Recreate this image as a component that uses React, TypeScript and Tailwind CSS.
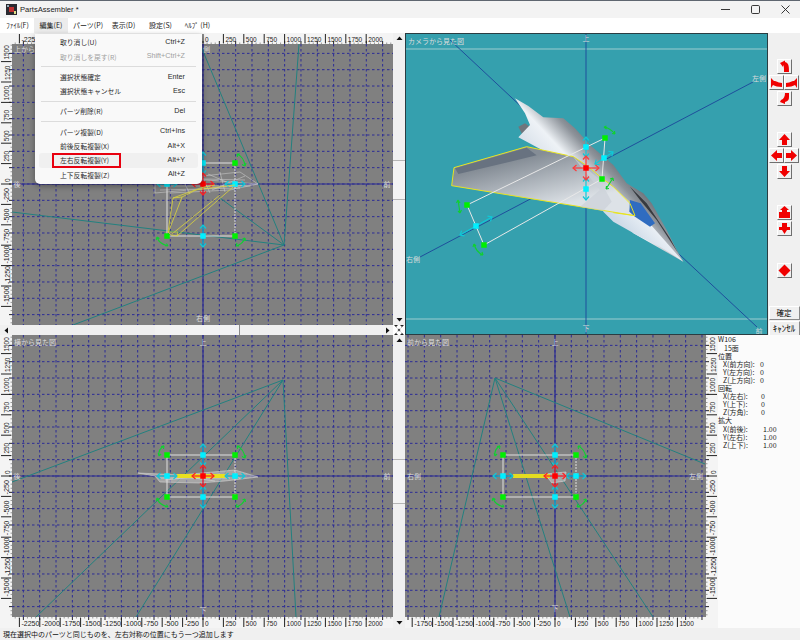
import React from "react";

const U = 20.4 / 250;
const GRID = 16.33;
const seq = (a: number, b: number, s: number) => {
  const r: number[] = [];
  for (let v = a; v <= b; v += s) r.push(v);
  return r;
};

type Box = [number, number, number, number];

function Lbl({ x, y, t, a = "middle" }: { x: number; y: number; t: string; a?: "start" | "middle" | "end" }) {
  return (
    <text x={x} y={y} fontSize={7} fill="#dcdcdc" textAnchor={a} dominantBaseline="central">
      {t}
    </text>
  );
}

function RulerText({ x, y, v, rot }: { x: number; y: number; v: number; rot?: boolean }) {
  const t = String(v);
  return (
    <text
      x={x}
      y={y}
      fontSize={8}
      fill="#222"
      textLength={t.length * 3.6}
      lengthAdjust="spacingAndGlyphs"
      transform={rot ? `rotate(-90 ${x} ${y})` : undefined}
      className="font-['Liberation_Sans',sans-serif]"
    >
      {t}
    </text>
  );
}

function Pane({
  box,
  canvas,
  ax,
  ay,
  xVals,
  yVals,
  rulerX,
  rulerY,
  children,
}: {
  box: Box;
  canvas: Box;
  ax: number;
  ay: number;
  xVals: number[];
  yVals: number[];
  rulerX: "top" | "bottom";
  rulerY: "left" | "right";
  children: React.ReactNode;
}) {
  const [x, y, w, h] = box;
  const [cx, cy, cw, ch] = canvas;
  const vert = seq(-30, 30, 1).map((n) => ax + n * GRID).filter((v) => v >= cx && v <= cx + cw);
  const horz = seq(-30, 30, 1).map((n) => ay + n * GRID).filter((v) => v >= cy && v <= cy + ch);
  const rxTop = rulerX === "top" ? cy - 11 : cy + ch;
  const ryLeft = rulerY === "left" ? cx - 12 : cx + cw;
  const edgeY = rulerX === "top" ? cy : cy + ch;
  const edgeX = rulerY === "left" ? cx : cx + cw;
  const dirY = rulerX === "top" ? -1 : 1;
  const dirX = rulerY === "left" ? -1 : 1;
  return (
    <svg className="block shrink-0" width={w} height={h} viewBox={`${x} ${y} ${w} ${h}`}>
      <rect x={x} y={y} width={w} height={h} fill="#f4f4f4" />
      <rect x={cx} y={cy} width={cw} height={ch} fill="#808080" />
      {vert.map((v) => (
        <line key={"v" + v} x1={v} x2={v} y1={cy} y2={cy + ch} stroke="#2c2c96" strokeDasharray="2.5 2.5" />
      ))}
      {horz.map((v) => (
        <line key={"h" + v} x1={cx} x2={cx + cw} y1={v} y2={v} stroke="#2c2c96" strokeDasharray="2.5 2.5" />
      ))}
      <line x1={ax} x2={ax} y1={cy} y2={cy + ch} stroke="#2a2a90" strokeWidth={1.2} />
      <line x1={cx} x2={cx + cw} y1={ay} y2={ay} stroke="#2a2a90" strokeWidth={1.2} />
      {children}
      {seq(-60, 60, 1).map((n) => {
        const px = ax + n * GRID * 0.25;
        if (px < cx || px > cx + cw) return null;
        const major = n % 4 === 0;
        return (
          <line key={"tx" + n} x1={px} x2={px} y1={edgeY} y2={edgeY + dirY * (major ? 3 : 1.5)} stroke={major ? "#222" : "#999"} />
        );
      })}
      {seq(-60, 60, 1).map((n) => {
        const py = ay + n * GRID * 0.25;
        if (py < cy || py > cy + ch) return null;
        const major = n % 4 === 0;
        return (
          <line key={"ty" + n} y1={py} y2={py} x1={edgeX} x2={edgeX + dirX * (major ? 3 : 1.5)} stroke={major ? "#222" : "#999"} />
        );
      })}
      {xVals.map((v) => {
        const px = ax + v * U;
        return (
          <g key={"rx" + v}>
            <line x1={px} x2={px} y1={rxTop + 1} y2={rxTop + 10} stroke="#222" />
            <RulerText x={px + 2} y={rxTop + 9} v={v} />
          </g>
        );
      })}
      {yVals.map((v) => {
        const py = ay - v * U;
        return (
          <g key={"ry" + v}>
            <line y1={py} y2={py} x1={ryLeft + 1} x2={ryLeft + 11} stroke="#222" />
            <RulerText x={ryLeft + 9.5} y={py - 2} v={v} rot />
          </g>
        );
      })}
    </svg>
  );
}

const Sq = ({ x, y, c, s = 5.5 }: { x: number; y: number; c: string; s?: number }) => (
  <rect x={x - s / 2} y={y - s / 2} width={s} height={s} fill={c} />
);

function Arrow2({ x, y, dx, dy, c }: { x: number; y: number; dx: number; dy: number; c: string }) {
  const n = Math.hypot(dx, dy);
  const ux = dx / n;
  const uy = dy / n;
  const hd = (sx: number, sy: number, d: number) =>
    `M${sx - ux * 3.5 * d - uy * 3} ${sy - uy * 3.5 * d + ux * 3}L${sx} ${sy}L${sx - ux * 3.5 * d + uy * 3} ${sy - uy * 3.5 * d - ux * 3}`;
  return (
    <g fill="none" stroke={c} strokeWidth={1.2}>
      <line x1={x - dx} y1={y - dy} x2={x + dx} y2={y + dy} />
      <path d={hd(x + dx, y + dy, 1)} />
      <path d={hd(x - dx, y - dy, -1)} />
    </g>
  );
}

function Rot({ d }: { d: string }) {
  return <path d={d} fill="none" stroke="#10d030" strokeWidth={1.1} />;
}

function Handles({ l, r, t, b, cx, cy }: { l: number; r: number; t: number; b: number; cx: number; cy: number }) {
  return (
    <g>
      <path d={`M${r} ${t}H${l}V${b}H${r}`} fill="none" stroke="#e0e0e0" strokeWidth={1} />
      <line x1={r} x2={r} y1={t} y2={b} stroke="#e0e0e0" strokeDasharray="2 1" />
      {[t, b].map((y) => (
        <Arrow2 key={y} x={cx} y={y} dx={0} dy={11} c="#10c8d8" />
      ))}
      {[l, r].map((x) => (
        <Arrow2 key={x} x={x} y={cy} dx={10} dy={0} c="#10c8d8" />
      ))}
      <Arrow2 x={cx} y={cy} dx={11} dy={0} c="#ff2020" />
      <Arrow2 x={cx} y={cy} dx={0} dy={11} c="#ff2020" />
      <Rot d={`M${l - 8} ${t + 1}Q${l - 9} ${t - 6} ${l - 3} ${t - 9}M${l - 3} ${t - 9}l-3 .5M${l - 3} ${t - 9}l-.5 3M${l - 8} ${t + 1}l-.8-3M${l - 8} ${t + 1}l2-2`} />
      <Rot d={`M${r + 2} ${t - 9}Q${r + 9} ${t - 6} ${r + 10} ${t + 3}M${r + 10} ${t + 3}l-3-1.5M${r + 10} ${t + 3}l1-3M${r + 2} ${t - 9}l3 0M${r + 2} ${t - 9}l.5 3`} />
      <Rot d={`M${l - 10} ${b + 1}Q${l - 8} ${b + 8} ${l + 1} ${b + 10}M${l + 1} ${b + 10}l-3-.3M${l + 1} ${b + 10}l-1.5-2.5M${l - 10} ${b + 1}l-.8 3M${l - 10} ${b + 1}l2.5 1.5`} />
      <Rot d={`M${r + 10} ${b + 2}Q${r + 8} ${b + 8} ${r + 1} ${b + 10}M${r + 1} ${b + 10}l3 0M${r + 1} ${b + 10}l1-3M${r + 10} ${b + 2}l-2.5.8M${r + 10} ${b + 2}l.5 3`} />
      {[
        [l, t],
        [r, t],
        [l, b],
        [r, b],
      ].map(([x, y]) => (
        <Sq key={x + "-" + y} x={x} y={y} c="#00f000" />
      ))}
      {[
        [cx, t],
        [cx, b],
        [l, cy],
        [r, cy],
      ].map(([x, y]) => (
        <Sq key={"c" + x + "-" + y} x={x} y={y} c="#00f0ff" />
      ))}
      <Sq x={cx} y={cy} c="#ff0000" />
    </g>
  );
}

function Teal({ apex, to }: { apex: [number, number]; to: [number, number][] }) {
  return (
    <g stroke="#23807f" strokeWidth={1} fill="none">
      {to.map(([x, y]) => (
        <line key={x + "," + y} x1={apex[0]} y1={apex[1]} x2={x} y2={y} />
      ))}
    </g>
  );
}

const X_LEFT = seq(-2250, 2000, 250);
const X_RIGHT = seq(-1750, 1500, 250);
const Y_VALS = seq(-1500, 1500, 250);

function TopView() {
  // ruler labels that lie wholly under the open menu are not drawn
  const xs = X_LEFT.filter((v) => v <= -2250 || v >= 0);
  return (
    <Pane box={[0, 33, 393, 292]} canvas={[12, 44, 381, 281]} ax={203} ay={184} xVals={xs} yVals={Y_VALS} rulerX="top" rulerY="left">
      <Teal apex={[284, 245]} to={[[200, 44], [299, 44], [12, 212], [73, 325], [220, 198]]} />
      <g fill="none" stroke="#d4d4d4" strokeWidth={0.5}>
        <path d="M155 176 L258 184 L155 193 Z" />
        <path d="M165 180 L240 172 L258 184 L230 190 L170 193" />
        <path d="M180 174 L190 194 M200 172 L210 193 M220 172 L225 192 M160 186 L250 186 M160 190 L240 188 M165 178 L245 180 M208 174 L240 188 M212 190 L245 176" />
      </g>
      <text x={14} y={49} fontSize={7} fill="#dcdcdc" dominantBaseline="central">上から</text>
      <text x={203} y={49} fontSize={7} fill="#dcdcdc" dominantBaseline="central">側</text>
      <Lbl x={203} y={318} t="右側" />
      <Lbl x={17} y={184} t="後" />
      <Lbl x={387} y={184} t="前" />
      <Handles l={167} r={235} t={163} b={236} cx={203} cy={184} />
      <g fill="none" stroke="#dcd43c" strokeWidth={0.8}>
        <path d="M168 232 L173 198 L182 197 L168 233" />
        <path d="M173 198 L195 190 L235 185" />
        <path d="M182 197 L200 188 L215 185" />
        <path d="M177 236 L233 187" />
        <path d="M172 234 L220 195" />
        <path d="M168 232 L178 232 L177 236 L171 235 Z" />
      </g>
    </Pane>
  );
}

function SideView() {
  return (
    <Pane box={[0, 335, 393, 293]} canvas={[12, 335, 381, 282]} ax={203} ay={476} xVals={X_LEFT} yVals={Y_VALS} rulerX="bottom" rulerY="left">
      <Teal apex={[283, 380]} to={[[12, 482], [36, 617], [136, 617], [296, 617]]} />
      <path d="M138 473 L180 475 L235 470 L258 477 L225 481 L200 483 L160 482 L155 476 Z" fill="#c4c4c4" fillOpacity={0.55} stroke="#d4d4d4" strokeWidth={0.6} />
      <path d="M160 478 L230 478 M165 480 L220 474 M180 476 L215 481 M235 472 L240 479" fill="none" stroke="#e0e0e0" strokeWidth={0.5} />
      <rect x={177} y={474} width={48} height={4} fill="#e8e020" />
      <Lbl x={14} y={342} t="横から見た図" a="start" />
      <Lbl x={203} y={342} t="上" />
      <Lbl x={203} y={610} t="下" />
      <Lbl x={17} y={476} t="後" />
      <Lbl x={387} y={476} t="前" />
      <Handles l={167} r={235} t={455} b={497} cx={203} cy={476} />
    </Pane>
  );
}

function FrontView() {
  return (
    <Pane box={[405, 335, 313, 293]} canvas={[405, 335, 301, 282]} ax={555} ay={476} xVals={X_RIGHT} yVals={Y_VALS} rulerX="bottom" rulerY="right">
      <Teal apex={[495, 378]} to={[[705, 464], [439, 617], [570, 617], [653, 617]]} />
      <path d="M545 474 L566 472 L565 481 L552 483 Z" fill="#c8c8c8" fillOpacity={0.6} stroke="#d0d0d0" strokeWidth={0.7} />
      <rect x={513} y={474} width={37} height={4} fill="#e4dc20" />
      <Lbl x={407} y={342} t="前から見た図" a="start" />
      <Lbl x={555} y={342} t="上" />
      <Lbl x={555} y={608} t="下" />
      <Lbl x={407} y={476} t="右側" a="start" />
      <Lbl x={703} y={476} t="左側" a="end" />
      <Handles l={503} r={576} t={455} b={497} cx={555} cy={476} />
    </Pane>
  );
}

function CameraView() {
  return (
    <svg className="block shrink-0" width={363} height={302} viewBox="405 33 363 302">
      <rect x={405} y={33} width={363} height={302} fill="#35a0ae" />
      <line x1={405} x2={768} y1={49} y2={49} stroke="#b8d8d8" strokeWidth={0.8} />
      <line x1={405} x2={768} y1={319} y2={319} stroke="#b8d8d8" strokeWidth={0.8} />
      <g stroke="#1f4f9c" strokeWidth={1}>
        <line x1={586} x2={586} y1={33} y2={334} />
        <line x1={420} y1={257} x2={753} y2={82} />
        <line x1={450} y1={40} x2={757} y2={327} />
      </g>
      <defs>
        <linearGradient id="fus" gradientUnits="userSpaceOnUse" x1={640} y1={350} x2={480} y2={500}>
          <stop offset="0" stopColor="#565c63" />
          <stop offset="0.28" stopColor="#8d939a" />
          <stop offset="0.55" stopColor="#eef2f6" />
          <stop offset="1" stopColor="#cfd9e4" />
        </linearGradient>
        <linearGradient id="wing" gradientUnits="userSpaceOnUse" x1={430} y1={370} x2={470} y2={530}>
          <stop offset="0" stopColor="#858d96" />
          <stop offset="1" stopColor="#dde2e7" />
        </linearGradient>
        <linearGradient id="nose" gradientUnits="userSpaceOnUse" x1={760} y1={560} x2={700} y2={620}>
          <stop offset="0" stopColor="#f4f7fa" />
          <stop offset="1" stopColor="#cfdbe8" />
        </linearGradient>
      </defs>
      <g transform="translate(400 30) scale(0.33333)">
        <path d="M355 290 L375 280 L392 292 L366 312 Z" fill="#70767c" />
        <path d="M345 205 L385 228 L430 262 L490 265 L525 295 L570 345 L640 405 L680 460 L730 490 L755 520 L800 600 L830 660 L850 695 L700 610 L500 400 L355 322 L390 285 L375 250 Z" fill="url(#fus)" />
        <path d="M690 470 L740 520 L810 625 L836 672 L770 570 L720 510 Z" fill="#2a2d31" opacity={0.85} />
        <path d="M600 500 L650 480 L705 530 L850 695 L780 650 L720 620 L640 575 L610 545 Z" fill="url(#nose)" />
        <path d="M380 350 L162 413 L155 467 L705 557 L690 520 L640 470 L600 440 L565 410 L520 380 Z" fill="url(#wing)" stroke="#e8e420" strokeWidth={3} />
        <path d="M380 353 L410 376 L175 432 L165 415 Z" fill="#687280" />
        <path d="M520 382 L600 450 L635 515 L610 542 L540 530 L600 480 Z" fill="#ccd2d8" opacity={0.7} />
        <path d="M690 510 L722 520 L765 580 L750 590 L705 560 L688 545 Z" fill="#2f6cc0" />
        <path d="M690 520 L705 557 L640 548" fill="none" stroke="#e8e420" strokeWidth={3} />
      </g>
      <g fill="none" stroke="#e8e8e8" strokeWidth={1}>
        <line x1={467} y1={205} x2={605} y2={138} />
        <line x1={484} y1={245} x2={602} y2={179} />
        <line x1={467} y1={205} x2={484} y2={245} />
        <line x1={605} y1={138} x2={602} y2={179} />
      </g>
      <Arrow2 x={586} y={147} dx={0} dy={10} c="#10c8d8" />
      <Arrow2 x={586} y={189} dx={0} dy={11} c="#10c8d8" />
      <Arrow2 x={604} y={158} dx={9} dy={-6} c="#10c8d8" />
      <Arrow2 x={476} y={226} dx={16} dy={-9} c="#10c8d8" />
      <Arrow2 x={586} y={168} dx={13} dy={0} c="#ff3a3a" />
      <Arrow2 x={586} y={168} dx={0} dy={12} c="#ff3a3a" />
      <Rot d="M604 127 Q610 128 615 134 M604 127l2.5 2M604 127l2.5-1M615 134l-.5-3M615 134l-3-.5" />
      <Rot d="M606 189 L613 178 M606 189l3-.5M606 189l.5-3M613 178l-3 1M613 178l.5 3" />
      <Rot d="M458 200 L460 213 M458 200l-1.5 3M458 200l2 3M460 213l-2-2M460 213l1.5-3" />
      <Rot d="M474 244 Q476 252 483 255 M474 244l-1 3M474 244l2 2M483 255l-3 0M483 255l-1-3" />
      <Sq x={605} y={138} c="#00f000" />
      <Sq x={602} y={179} c="#00f000" />
      <Sq x={467} y={205} c="#00f000" />
      <Sq x={484} y={245} c="#00f000" />
      <Sq x={586} y={147} c="#00f0ff" />
      <Sq x={586} y={189} c="#00f0ff" />
      <Sq x={604} y={158} c="#00f0ff" />
      <Sq x={476} y={226} c="#00f0ff" />
      <Sq x={586} y={168} c="#ff0000" />
      <Lbl x={408} y={41} t="カメラから見た図" a="start" />
      <Lbl x={586} y={38} t="上" />
      <Lbl x={586} y={328} t="下" />
      <Lbl x={759} y={78} t="左側" />
      <Lbl x={413} y={259} t="右側" />
      <Lbl x={759} y={331} t="前" />
      <rect x={405.5} y={33.5} width={362} height={301} fill="none" stroke="#2a3d42" />
    </svg>
  );
}

function IconBtn({ d }: { d: string }) {
  return (
    <button className="flex h-[15px] w-[15px] items-center justify-center border border-t-white border-l-white border-r-[#6f6f6f] border-b-[#6f6f6f] bg-[#f0f0f0] p-0">
      <svg width={13} height={13} viewBox="0 0 13 13">
        <path d={d} fill="#f00000" />
      </svg>
    </button>
  );
}

function Cross({ t, l, r, b }: { t: string; l: string; r: string; b: string }) {
  return (
    <div className="flex flex-col items-center gap-[1px]">
      <IconBtn d={t} />
      <div className="flex">
        <IconBtn d={l} />
        <IconBtn d={r} />
      </div>
      <IconBtn d={b} />
    </div>
  );
}

function SidePanel() {
  return (
    <div className="flex w-[32px] shrink-0 flex-col items-center bg-[#f0f0f0] pt-[26px]">
      <Cross
        t="M2 3 L7 0.5 V2 C11 3 11 7 11 12 H6 C6 8 6 6 5 5 V7 Z"
        l="M1 2 L4 5 H5 C8 6 10 7 12 7 V11 C8 11 5 10 3 9 L1 12 Z"
        r="M12 2 L9 5 H8 C5 6 3 7 1 7 V11 C5 11 8 10 10 9 L12 12 Z"
        b="M7 1 H11 V5 C11 8 10 9 7 10 V12 L2 10 L3 8 C6 7 7 4 7 1 Z"
      />
      <div className="mt-[26px]">
        <Cross
          t="M6.5 1 L12 7 H9 V12 H4 V7 H1 Z"
          l="M1 6.5 L7 1 V4 H12 V9 H7 V12 Z"
          r="M12 6.5 L6 1 V4 H1 V9 H6 V12 Z"
          b="M6.5 12 L12 6 H9 V1 H4 V6 H1 Z"
        />
      </div>
      <div className="mt-[26px] flex flex-col gap-[1px]">
        <IconBtn d="M6.5 0 L11 4 H9 V6 H12 V12 H1 V6 H4 V4 H2 Z" />
        <IconBtn d="M4 1 H9 V5 L12 5 V8 H9 L6.5 12 L4 8 H1 V5 H4 Z" />
      </div>
      <div className="mt-[27px]">
        <IconBtn d="M6.5 0.5 L12.5 6.5 L6.5 12.5 L0.5 6.5 Z" />
      </div>
      <div className="mt-[28px] flex w-[31px] flex-col gap-[1px]">
        <button className="h-[14px] border border-t-white border-l-white border-r-[#8a8a8a] border-b-[#8a8a8a] bg-[#f0f0f0] p-0 text-[7.5px] leading-[12px] text-black">確定</button>
        <button className="h-[15px] border border-t-white border-l-white border-r-[#8a8a8a] border-b-[#8a8a8a] bg-[#f0f0f0] p-0 text-[9px] leading-[13px] text-black">ｷｬﾝｾﾙ</button>
      </div>
    </div>
  );
}

function InfoRow({ k, v, w }: { k: string; v: string; w: string }) {
  return (
    <div className="flex pl-[5px]">
      <span className={w}>{k}</span>
      <span>{v}</span>
    </div>
  );
}

function InfoPanel() {
  return (
    <div className="flex-1 bg-[#fbfbfb] text-[7px] leading-[8.1px] text-[#222]">
      <div className="h-[8.6px]">W106</div>
      <div className="pl-[6px]">15面</div>
      <div>位置</div>
      <InfoRow k="X(前方向):" v="0" w="w-[37px]" />
      <InfoRow k="Y(左方向):" v="0" w="w-[37px]" />
      <InfoRow k="Z(上方向):" v="0" w="w-[37px]" />
      <div>回転</div>
      <InfoRow k="X(左右):" v="0" w="w-[38px]" />
      <InfoRow k="Y(上下):" v="0" w="w-[38px]" />
      <InfoRow k="Z(方角):" v="0" w="w-[38px]" />
      <div>拡大</div>
      <InfoRow k="X(前後):" v="1.00" w="w-[40px]" />
      <InfoRow k="Y(左右):" v="1.00" w="w-[40px]" />
      <InfoRow k="Z(上下):" v="1.00" w="w-[40px]" />
    </div>
  );
}

const Tri = ({ d }: { d: string }) => (
  <svg width={9} height={9} viewBox="0 0 9 9">
    <path d={d} fill="#111" />
  </svg>
);

function VScroll({ thumbTop, thumbH }: { thumbTop: number; thumbH: number }) {
  return (
    <div className="flex w-[12px] shrink-0 flex-col bg-[#f0f0f0]">
      <div className="flex h-[11px] items-center justify-center">
        <Tri d="M4.5 2.5 L7.5 6 H1.5 Z" />
      </div>
      <div className="flex-1">
        <div style={{ height: thumbTop }} />
        <div className="border-y border-[#b5b5b5] bg-[#f3f3f3]" style={{ height: thumbH }} />
      </div>
      <div className="flex h-[11px] items-center justify-center">
        <Tri d="M4.5 6.5 L7.5 3 H1.5 Z" />
      </div>
    </div>
  );
}

function HScroll() {
  return (
    <div className="flex h-[10px] bg-[#f0f0f0]">
      <div className="flex w-[12px] items-center justify-center">
        <Tri d="M2.5 4.5 L6 1.5 V7.5 Z" />
      </div>
      <div className="ml-[143px] w-[85px] border-r border-[#8a8a8a] bg-[#f3f3f3]" />
      <div className="flex-1" />
      <div className="flex w-[12px] items-center justify-center">
        <Tri d="M6.5 4.5 L3 1.5 V7.5 Z" />
      </div>
      <div className="flex w-[12px] items-center justify-center bg-white">
        <svg width={10} height={10} viewBox="0 0 10 10">
          <path d="M0 0H4L2 2ZM10 0H6L8 2ZM0 10H4L2 8ZM10 10H6L8 8ZM5 3.5L6.5 5L5 6.5L3.5 5Z" fill="#222" />
          <path d="M1 1L9 9M9 1L1 9" stroke="#777" strokeDasharray="1 1" strokeWidth={0.8} />
        </svg>
      </div>
    </div>
  );
}

type MI = { t?: string; s?: string; dim?: boolean; hi?: boolean };

const MENU: MI[] = [
  { t: "取り消し(U)", s: "Ctrl+Z" },
  { t: "取り消しを戻す(R)", s: "Shift+Ctrl+Z", dim: true },
  {},
  { t: "選択状態確定", s: "Enter" },
  { t: "選択状態キャンセル", s: "Esc" },
  {},
  { t: "パーツ削除(R)", s: "Del" },
  {},
  { t: "パーツ複製(D)", s: "Ctrl+Ins" },
  { t: "前後反転複製(X)", s: "Alt+X" },
  { t: "左右反転複製(Y)", s: "Alt+Y", hi: true },
  { t: "上下反転複製(Z)", s: "Alt+Z" },
];

function Dropdown() {
  return (
    <div className="absolute left-[35px] top-[33px] z-10 h-[150px] w-[167px] rounded-b-[5px] bg-[#f9f9f9] px-[4px] pt-[1.2px] text-[6.8px] shadow-[0_2px_6px_rgba(0,0,0,0.35)]">
      {MENU.map((m, i) =>
        m.t ? (
          <div
            key={i}
            className={`relative flex h-[14.3px] items-center justify-between rounded-[3px] pl-[21px] pr-[13px] ${m.hi ? "bg-[#f0f0f0]" : ""} ${m.dim ? "text-[#a0a0a0]" : "text-[#2a2a2a]"}`}
          >
            <span>{m.t}</span>
            <span className="font-['Liberation_Sans',sans-serif] text-[7.2px]">{m.s}</span>
            {m.hi && <div className="absolute left-[13px] top-[-0.5px] h-[15.5px] w-[69px] border-2 border-[#e8000f]" />}
          </div>
        ) : (
          <div key={i} className="flex h-[6px] items-center px-[2px]">
            <div className="h-px w-full bg-[#dcdcdc]" />
          </div>
        )
      )}
    </div>
  );
}

const MENUBAR: [string, number, string?][] = [
  ["ﾌｧｲﾙ(F)", 25],
  ["編集(E)", 24, "hi"],
  ["パーツ(P)", 27],
  ["表示(D)", 26],
  ["設定(S)", 25],
  ["ﾍﾙﾌﾟ (H)", 26],
];

export default function App() {
  return (
    <div className="relative flex h-[640px] w-[800px] flex-col overflow-hidden border-t border-[#5f6670] bg-[#f0f0f0] font-['Noto_Sans_CJK_JP','Liberation_Sans',sans-serif] text-black">
      <div className="flex h-[17px] shrink-0 items-center bg-[#f3f3f3] pl-[6px]">
        <svg width={11} height={11} viewBox="0 0 11 11">
          <rect width={11} height={11} fill="#2a2a30" />
          <rect x={3} y={3} width={5} height={5} fill="#c03030" />
          <rect x={1} y={1} width={2} height={2} fill="#9ab" />
          <rect x={8} y={7} width={2} height={3} fill="#dd8" />
        </svg>
        <span className="ml-[3px] font-['Liberation_Sans',sans-serif] text-[7.6px] text-[#222]">PartsAssembler *</span>
        <div className="ml-auto flex h-full items-center">
          {[
            <path key="a" d="M0 4.5H9" stroke="#222" strokeWidth={0.9} fill="none" />,
            <rect key="b" x={0.5} y={0.5} width={8} height={8} rx={1.2} stroke="#222" strokeWidth={0.9} fill="none" />,
            <path key="c" d="M0.5 0.5L8.5 8.5M8.5 0.5L0.5 8.5" stroke="#222" strokeWidth={0.9} fill="none" />,
          ].map((el, i) => (
            <div key={i} className="flex h-full w-[30px] items-center justify-center">
              <svg width={9} height={9} viewBox="0 0 9 9">
                {el}
              </svg>
            </div>
          ))}
        </div>
      </div>
      <div className="flex h-[15px] shrink-0 items-center bg-white pl-[1px] text-[7px] text-[#222]">
        {MENUBAR.map(([t, w, h], i) => (
          <div
            key={t}
            className={`flex h-full items-center justify-center ${h ? "bg-[#ececec]" : ""} ${i === 0 ? "w-[33px]" : i === 1 ? "w-[34px]" : "w-[37px]"}`}
          >
            <span style={{ width: w }} className="whitespace-nowrap text-center">
              {t}
            </span>
          </div>
        ))}
      </div>
      <Dropdown />
      <div className="grid h-[595px] shrink-0 grid-cols-[405px_395px] grid-rows-[302px_293px]">
        <div className="flex flex-col">
          <div className="flex h-[292px]">
            <TopView />
            <VScroll thumbTop={116} thumbH={40} />
          </div>
          <HScroll />
        </div>
        <div className="flex">
          <CameraView />
          <SidePanel />
        </div>
        <div className="flex">
          <SideView />
          <VScroll thumbTop={113} thumbH={45} />
        </div>
        <div className="flex">
          <FrontView />
          <InfoPanel />
        </div>
      </div>
      <div className="flex h-[12px] shrink-0 items-center bg-[#f0f0f0] pl-[3px] text-[7px] text-[#111]">
        現在選択中のパーツと同じものを、左右対称の位置にもう一つ追加します
      </div>
    </div>
  );
}
